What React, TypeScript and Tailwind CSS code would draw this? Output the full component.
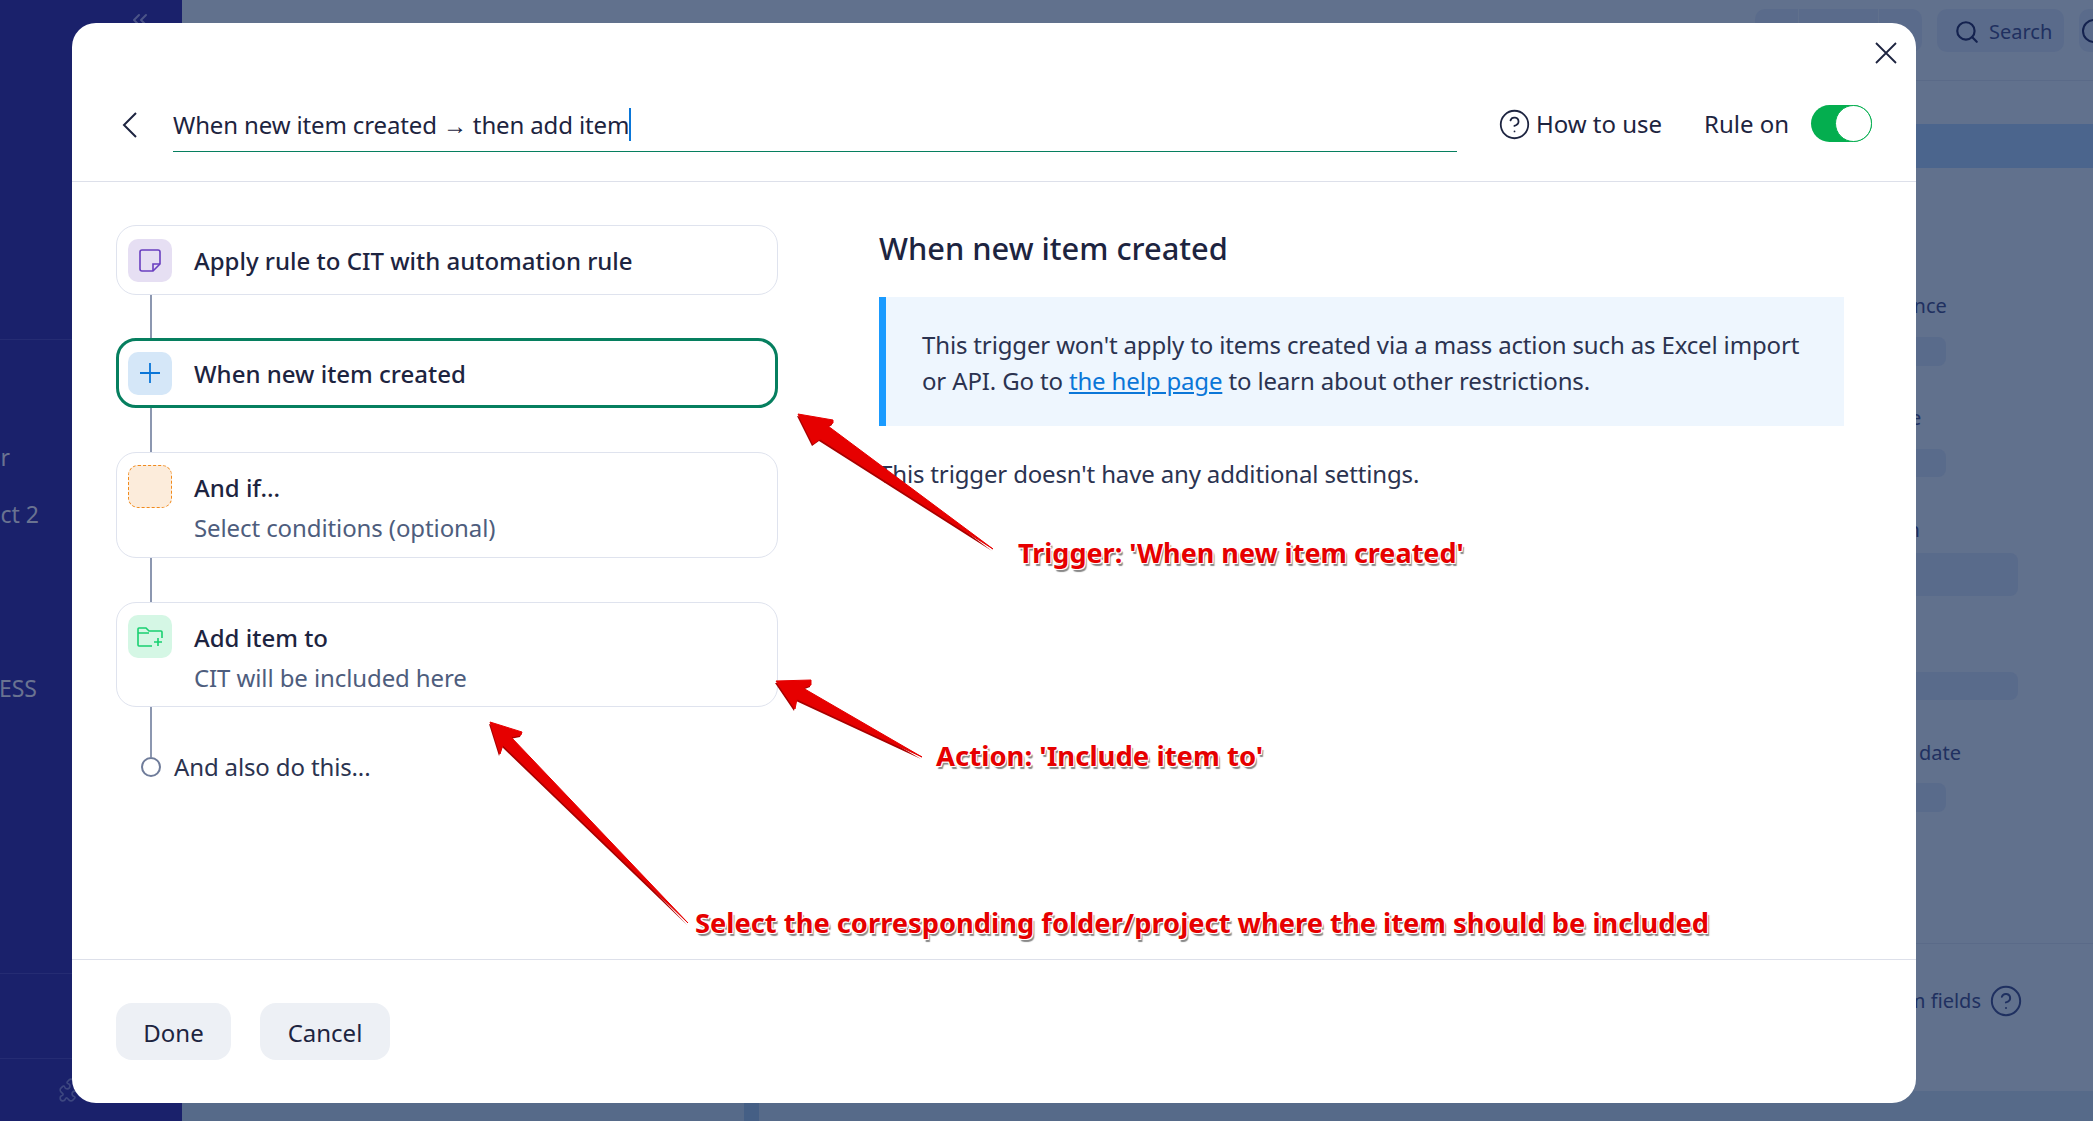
import { ChevronsLeft, CircleHelp, Puzzle, Search } from "lucide-react";

const Connector = ({ h }: { h: string }) => <div className={`ml-[34px] w-[2px] bg-[#8c97b0] ${h}`} />;

const Sidebar = () => (
  <div className="flex h-full w-[182px] shrink-0 flex-col overflow-hidden bg-[#1a216b] font-['Noto_Sans',sans-serif] text-[23px] text-[#6a7391]">
    <div className="flex h-[340px] shrink-0 justify-end border-b border-[#252c73] pt-[8px] pr-[30px]">
      <ChevronsLeft className="h-[24px] w-[24px] text-[#4b5488]" />
    </div>
    <div className="flex w-[10px] shrink-0 justify-end whitespace-nowrap pt-[103px] leading-[28px]">Folder</div>
    <div className="flex w-[39px] shrink-0 justify-end whitespace-nowrap pt-[29px] leading-[28px]">Project 2</div>
    <div className="flex w-[37px] shrink-0 justify-end whitespace-nowrap pt-[146px] leading-[28px]">BUSINESS</div>
    <div className="mt-auto h-[86px] border-y border-[#252c73]" />
    <div className="flex h-[62px] pl-[58px] pt-[18px]">
      <Puzzle className="h-[26px] w-[26px] text-[#3d4780]" strokeWidth={1.5} />
    </div>
  </div>
);

const Field = ({ className }: { className: string }) => <div className={`rounded-[8px] bg-[#596b8b] ${className}`} />;

const Background = () => (
  <div className="flex h-[1121px] w-[2093px] overflow-hidden">
    <Sidebar />
    <div className="flex min-w-0 flex-1 flex-col bg-[#61718d] font-['Noto_Sans',sans-serif] text-[20px] leading-[24px] text-[#1f3060]">
      <div className="flex h-[81px] shrink-0 items-start justify-end gap-[15px] border-b border-[#5a6a88] pt-[9px]">
        <div className="flex h-[43px] w-[167px] gap-[1px]">
          <div className="w-[43px] rounded-l-[10px] bg-[#5a6b8b]" />
          <div className="flex-1 bg-[#5a6b8b]" />
          <div className="w-[43px] rounded-r-[10px] bg-[#5a6b8b]" />
        </div>
        <div className="flex h-[43px] w-[127px] items-center gap-[9px] rounded-[10px] bg-[#5a6b8b] pl-[17px] pt-[2px]">
          <Search className="h-[26px] w-[26px] text-[#14224f]" strokeWidth={2} />
          <span>Search</span>
        </div>
        <div className="flex h-[43px] w-[14px] items-center overflow-hidden rounded-l-[10px] bg-[#5a6b8b] pl-[3px]">
          <div className="h-[24px] w-[24px] shrink-0 rounded-full border-2 border-[#14224f]" />
        </div>
      </div>
      <div className="mt-[43px] h-[44px] shrink-0 bg-[#4b658d]" />
      <div className="flex flex-1 flex-col border-b border-[#5a6a88] pl-[1655px] pt-[126px]">
        <div>Importance</div>
        <Field className="mt-[19px] h-[29px] w-[109px]" />
        <div className="mt-[40px]">Assignee</div>
        <Field className="mt-[19px] h-[28px] w-[109px]" />
        <div className="mt-[41px]">Duration</div>
        <Field className="mt-[11px] h-[43px] w-[181px]" />
        <Field className="mt-[76px] h-[28px] w-[181px]" />
        <div className="mt-[41px]">Planned date</div>
        <Field className="mt-[18px] h-[29px] w-[109px]" />
      </div>
      <div className="flex h-[147px] shrink-0 items-center justify-end gap-[8px] pr-[70px] pb-[34px]">
        <span>Custom fields</span>
        <CircleHelp className="h-[34px] w-[34px]" strokeWidth={1.4} />
      </div>
      <div className="flex h-[30px] shrink-0 bg-[#566a89] pl-[562px]">
        <div className="h-full w-[15px] bg-[#455f85]" />
      </div>
    </div>
  </div>
);

const Tile = ({ className, children }: { className: string; children?: React.ReactNode }) => (
  <div className={`flex h-[43px] w-[44px] shrink-0 items-center justify-center rounded-[10px] ${className}`}>{children}</div>
);

const NoteIcon = () => (
  <svg width="22" height="23" viewBox="0 0 22 23" fill="none" stroke="#6a3fc0" strokeWidth="1.6">
    <path d="M3 1h16a2 2 0 0 1 2 2v12l-7 7H3a2 2 0 0 1-2-2V3a2 2 0 0 1 2-2z" />
    <path d="M21 15h-7v7" />
  </svg>
);

const PlusIcon = () => (
  <svg width="22" height="22" viewBox="0 0 22 22" fill="none" stroke="#0a76d8" strokeWidth="1.8">
    <path d="M11 1v20M1 11h20" />
  </svg>
);

const FolderPlusIcon = () => (
  <svg width="27" height="20" viewBox="0 0 27 20" fill="none" stroke="#18d070" strokeWidth="1.6">
    <path d="M15 19H2a1 1 0 0 1-1-1V2a1 1 0 0 1 1-1h7l3 3h12a1 1 0 0 1 1 1v6" />
    <path d="M1 6h11M21 11v8M17 15h8" />
  </svg>
);

const Card = ({ title, sub, tile, active, h }: { title: string; sub?: string; tile: React.ReactNode; active?: boolean; h?: string }) => (
  <div
    className={
      active
        ? "flex h-[70px] items-center gap-[22px] rounded-[20px] border-[3px] border-[#067f5f] pl-[9px]"
        : sub
          ? `flex gap-[22px] rounded-[20px] border border-[#dfe3ee] pl-[11px] pt-[12px] ${h}`
          : "flex h-[70px] items-center gap-[22px] rounded-[20px] border border-[#dfe3ee] pl-[11px]"
    }
  >
    {tile}
    <div className={sub ? "pt-[7px]" : "pt-[2px]"}>
      <div className="text-[24px] font-medium leading-[32px] text-[#1d2440]">{title}</div>
      {sub && <div className="mt-[8px] text-[24px] leading-[32px] tracking-[-0.1px] text-[#4e5d7d]">{sub}</div>}
    </div>
  </div>
);

const Modal = () => (
  <div className="absolute left-[72px] top-[23px] flex h-[1080px] w-[1844px] flex-col rounded-[24px] bg-white font-['Noto_Sans',sans-serif] text-[24px] leading-[36px] text-[#1d2440]">
    <button className="absolute right-[19px] top-[19px]">
      <svg width="22" height="22" viewBox="0 0 22 22" fill="none" stroke="#1d2440" strokeWidth="1.8">
        <path d="M1 1l20 20M21 1L1 21" />
      </svg>
    </button>

    <div className="flex h-[159px] shrink-0 items-start border-b border-[#dde0ea] pl-[50px] pr-[44px] pt-[79px]">
      <svg className="mt-[10px] shrink-0" width="16" height="26" viewBox="0 0 16 26" fill="none" stroke="#1d2440" strokeWidth="2">
        <path d="M14 1L2 13l12 12" />
      </svg>
      <div className="ml-[35px] flex h-[50px] w-[1288px] items-center border-b border-[#067f5f] pb-[4px]">
        <span className="whitespace-nowrap tracking-[-0.14px]">When new item created → then add item</span>
        <span className="h-[33px] w-[2px] bg-[#0a76d8]" />
      </div>
      <div className="ml-[41px] flex items-center gap-[5px] pt-[4px]">
        <CircleHelp className="h-[33px] w-[33px]" strokeWidth={1.3} />
        <span className="whitespace-nowrap">How to use</span>
      </div>
      <span className="ml-[42px] whitespace-nowrap pt-[4px]">Rule on</span>
      <div className="ml-[22px] mt-[3px] flex h-[37px] w-[61px] justify-end rounded-full bg-[#04ae4f]">
        <div className="h-[37px] w-[37px] rounded-full border border-[#04ae4f] bg-white" />
      </div>
    </div>

    <div className="flex min-h-0 flex-1 pl-[44px] pt-[43px]">
      <div className="w-[662px] shrink-0">
        <Card title="Apply rule to CIT with automation rule" tile={<Tile className="bg-[#e6dff3]"><NoteIcon /></Tile>} />
        <Connector h="h-[43px]" />
        <Card active title="When new item created" tile={<Tile className="bg-[#d5e7f8]"><PlusIcon /></Tile>} />
        <Connector h="h-[44px]" />
        <Card
          h="h-[106px]"
          title="And if..."
          sub="Select conditions (optional)"
          tile={<Tile className="border border-dashed border-[#f08a1d] bg-[#fcecdb]" />}
        />
        <Connector h="h-[44px]" />
        <Card h="h-[105px]" title="Add item to" sub="CIT will be included here" tile={<Tile className="bg-[#d5f7e5]"><FolderPlusIcon /></Tile>} />
        <Connector h="h-[50px]" />
        <div className="flex h-[20px] items-center gap-[13px] pl-[25px]">
          <div className="h-[20px] w-[20px] rounded-full border-2 border-[#6f7c9a]" />
          <span className="leading-[20px] tracking-[-0.14px] text-[#2b3350]">And also do this...</span>
        </div>
      </div>
      <div className="ml-[101px] w-[965px] shrink-0 tracking-[-0.15px] text-[#2b3350]">
        <div className="pt-[3px] text-[30.8px] font-medium leading-[40px] tracking-normal text-[#1d2440]">When new item created</div>
        <div className="mt-[29px] h-[129px] border-l-[7px] border-[#1a9bff] bg-[#eef6fe] pl-[36px] pr-[30px] pt-[30px]">
          This trigger won't apply to items created via a mass action such as Excel import or API. Go to{" "}
          <span className="text-[#0a76d8] underline">the help page</span> to learn about other restrictions.
        </div>
        <div className="mt-[30px]">This trigger doesn't have any additional settings.</div>
      </div>
    </div>

    <div className="flex h-[144px] shrink-0 gap-[29px] border-t border-[#dde0ea] pl-[44px] pt-[43px]">
      <button className="h-[57px] w-[115px] rounded-[16px] bg-[#edf0f5] pt-[2px]">Done</button>
      <button className="h-[57px] w-[130px] rounded-[16px] bg-[#edf0f5] pt-[2px]">Cancel</button>
    </div>
  </div>
);

const Annotations = () => (
  <>
    <svg className="absolute left-0 top-0" width="2093" height="1121" viewBox="0 0 2093 1121">
      <g fill="#a80000" transform="translate(-1 2)">
        <path d="M798 414L833 420L833 423L828 426L993 549L820 439L813 444Z" />
        <path d="M776 681L811 680L811 685L803 688L922 757L797 699L795 709Z" />
        <path d="M490 722L522 732L521 735L511 737L688 923L503 745L500 754Z" />
      </g>
      <g fill="#e60000" stroke="#e60000" strokeWidth="1" strokeLinejoin="round">
        <path d="M798 414L833 420L833 423L828 426L993 549L820 439L813 444Z" />
        <path d="M776 681L811 680L811 685L803 688L922 757L797 699L795 709Z" />
        <path d="M490 722L522 732L521 735L511 737L688 923L503 745L500 754Z" />
      </g>
    </svg>
    <div className="absolute left-[1018px] top-[533px] whitespace-nowrap font-['Noto_Sans',sans-serif] text-[27px] font-bold leading-[40px] text-[#e60000] [text-shadow:1px_1px_0_#fff,-1px_-1px_0_#fff,1px_-1px_0_#fff,-1px_1px_0_#fff,2px_3px_1px_#888]">
      Trigger: 'When new item created'
    </div>
    <div className="absolute left-[936px] top-[736px] whitespace-nowrap font-['Noto_Sans',sans-serif] text-[27.5px] font-bold leading-[40px] text-[#e60000] [text-shadow:1px_1px_0_#fff,-1px_-1px_0_#fff,1px_-1px_0_#fff,-1px_1px_0_#fff,2px_3px_1px_#888]">
      Action: 'Include item to'
    </div>
    <div className="absolute left-[695px] top-[903px] whitespace-nowrap font-['Noto_Sans',sans-serif] text-[27.3px] font-bold leading-[40px] text-[#e60000] [text-shadow:1px_1px_0_#fff,-1px_-1px_0_#fff,1px_-1px_0_#fff,-1px_1px_0_#fff,2px_3px_1px_#888]">
      Select the corresponding folder/project where the item should be included
    </div>
  </>
);

export default function App() {
  return (
    <div className="relative h-[1121px] w-[2093px] overflow-hidden">
      <Background />
      <Modal />
      <Annotations />
    </div>
  );
}
